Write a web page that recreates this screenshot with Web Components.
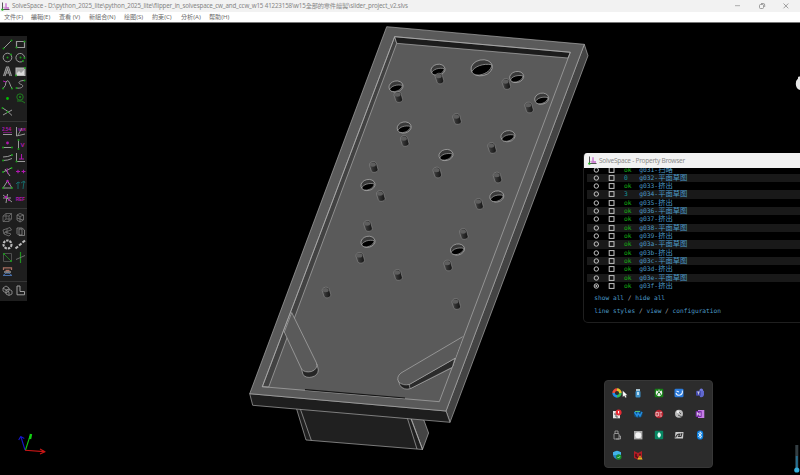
<!DOCTYPE html>
<html lang="zh-Hant">
<head>
<meta charset="utf-8">
<title>SolveSpace</title>
<style>
html,body{margin:0;background:#000;overflow:hidden}
body{width:800px;height:475px}
</style>
</head>
<body>
<solve-app></solve-app>
<script>
const FONT = '"Noto Sans","Noto Sans CJK TC",sans-serif';
function define(name, build){
  customElements.define(name, class extends HTMLElement{
    connectedCallback(){
      if(this.shadowRoot) return;
      this.attachShadow({mode:'open'}).innerHTML = build(this);
    }
  });
}

const LOGO = `<svg viewBox="0 0 9 9" width="9" height="9" fill="none"><path d="M1.5 .5V7.5H8.5" stroke="#555"/><path d="M5 1.2V6M3.3 6H8" stroke="#c86ad0" stroke-width="1.3"/><path d="M2 5.5L4.5 5V7" stroke="#c99acb" stroke-width=".7"/><circle cx="1.4" cy="7.6" r="1.2" fill="#28b428"/></svg>`;

define('app-titlebar', el => `<style>
:host{display:flex;align-items:center;height:12px;background:#f2f2f2;color:#858585;font:6.2px/12px ${FONT};white-space:pre}
svg{display:block;flex:none}.logo{margin-left:1px;width:11px}.t{letter-spacing:-.137px}
.c{margin-left:auto;display:flex;justify-content:space-between;padding-right:10px;width:56px}
</style><span class="logo">${LOGO}</span><span class="t"><slot></slot></span>
<span class="c"><svg width="8" height="8"><path d="M1 3.7H6" stroke="#999" stroke-width=".8"/></svg>
<svg width="8" height="8" fill="none" stroke="#888" stroke-width=".8"><rect x="1.5" y="2.5" width="4" height="4" rx="1"/><path d="M3 1.5H5.5Q6.7 1.5 6.7 3V5"/></svg>
<svg width="8" height="8"><path d="M1.5 1.5L6.3 6.3M6.3 1.5L1.5 6.3" stroke="#888" stroke-width=".8"/></svg></span>`);

define('app-menubar', () => {
  const items=[['文件(F)',27],['編輯(E)',28],['查看 (V)',30],['新組合(N)',35],['绘图(S)',28],['約束(C)',29],['分析(A)',28],['帮助(H)',30]];
  return `<style>:host{display:flex;height:10px;padding-left:4px;background:#fff;border-bottom:1px solid #777;color:#6c6c6c;font:6.1px/10px ${FONT};white-space:pre}</style>`+
   items.map(([t,w])=>`<span style="width:${w}px">${t}</span>`).join('');
});

/* tool glyphs, drawn in a 13 x 13 box */
const g='#35b335', w='#a8a8a8', m='#c018c0';
const L=(d,c=w,s=1)=>`<path d="${d}" stroke="${c}" stroke-width="${s}"/>`;
const D=(x,y,c='#18a818',r=1)=>`<circle cx="${x}" cy="${y}" r="${r}" fill="${c}"/>`;
const T=(t,x,y,c=m,s=4.6)=>`<text x="${x}" y="${y}" fill="${c}" font-size="${s}" font-weight="bold">${t}</text>`;
const groups=[[
 L('M2.5 10.5L10.5 2.5')+D(2.5,10.5)+D(10.5,2.5),
 L('M2.5 3.5H10.5V9.5H2.5Z',w,1.2)+D(2.5,9.5)+D(10.5,3.5),
 `<circle cx="6.5" cy="6.5" r="4.3" stroke="${w}"/>`+D(6.5,6.5)+D(10,3.5),
 L('M9 10A4.3 4.3 0 1 1 10.5 7')+D(6.5,6.5)+D(10.5,7)+D(9,10),
 L('M2.5 11L5.5 2H7.5L10.5 11M4 11L6.5 4L9 11M4.5 8H8.5',w,1.1),
 `<rect x="2" y="3" width="9" height="7.5" fill="#aaa" stroke="#ccc"/><path d="M3 8L5 6L7 8L10 5V10H3Z" fill="#eee"/>`+D(2,10.5)+D(11,3),
 L('M2 10.5Q5 8 5 4Q7 1 8.5 5T11 10.5')+L('M2 3L5 4',m)+D(2,10.5)+D(11,10.5),
 L('M10.5 2.5C4 2.5 4 5.5 6.5 6.2C10.5 7 9 11 2.5 10')+D(10.5,2.5)+D(2.5,10),
 D(6.5,6.5,'#00d000',1.4),
 `<circle cx="6" cy="5" r="3.2" stroke="#208a20"/>`+D(6,5)+L('M3 9Q9 8 11 11','#208a20'),
 L('M1.5 3Q6 5 11 10.5M2 10L11 5')+D(6.5,7)+D(1.5,3)
],[
 T('2.54',1,6)+L('M2 9.5H11')+L('M2 7.5H11',m,.6),
 L('M2.5 2V11L11 9')+T('VAR',4,6,m,3.8)+L('M4 10L8 3',w,.8),
 D(6.5,5,m,1.4)+L('M2 9.5H11')+D(2,9.5)+D(11,9.5),
 L('M4.5 2V11')+T('V',6.5,8.5,m,6)+D(4.5,2)+D(4.5,11),
 L('M2 6Q7 6 11 4M2 9.5Q7 9.5 11 7.5')+D(2,9.5)+D(11,4),
 L('M2.5 2V10.5H11')+L('M7.5 3V8M5 8H10',m)+D(2.5,10.5),
 L('M2 7L10.5 3M4 4L9 11')+D(2,7)+D(10.5,3)+L('M6 3L7 9',m,.8),
 L('M2 6.5H6M4 4.8V8.2M7.5 6.5H11.5M9.5 4.8V8.2',m,1.1),
 L('M2 10L6.5 3L11 10Z')+D(2,10)+D(11,10)+D(6.5,3,m,1.2)+D(8.5,6,m),
 L('M4 11V4L2 6M4 4L6 5M9 11L10 3L7 5M10 3L11 5','#157878',.9),
 L('M2 3L11 10M6.5 2L5 11M2 6L10 6')+D(5,5,m,1.2)+D(8,8,m),
 T('REF',1.7,8.5)
],[
 L('M2 5L5 2.5H10.5V8L8 10.5H2ZM2 5H8V10.5M8 5L10.5 2.5M5 2.5V8H10.5M5 8L2 10.5','#777',.8),
 L('M3 4L6 2.5L9.5 4V9L6 11L3 9ZM3 4L6 5.5L9.5 4M6 5.5V11M3 7L9 9','#888',.8),
 L('M2 5L9 2.5L10.5 5L4 7L10 9L8 11L3 9ZM4 7L3 9M6 4V9','#777',.9),
 L('M3 3H8L10.5 5V10.5H5L3 8.5ZM5 4H8V10H5Z','#999',.8),
 `<circle cx="6.5" cy="6.5" r="4" stroke="#ccc" stroke-width="2.1" stroke-dasharray="2.4 1"/>`,
 L('M1.5 10.5L4 8.5M5 7.5L7.5 5.5M8.5 4.5L11 2.5','#ccc',2.2),
 L('M2.5 2.5H10.5V10.5H2.5Z','#555')+L('M3 3L10 10','#208a20')+D(3,3)+D(10,10),
 L('M6.5 1V12','#20a020',1.2)+L('M2 8.5L11 4.5','#888',.8),
 L('M2.5 5V2.8H10.5V5M4.5 5.5H8.5','#b9786a',1.3)+L('M2 10.5L5 8.2H8L11 10.5Z','#4b75b5')+L('M3 7H10','#ddd')
],[
 L('M2 4L5 2L8 4V7L5 9L2 7ZM5 6L8 5L11 7V10L8 11.5L5 10ZM2 4L8 8V11','#aaa',.8),
 L('M3 2H6V7.5H10.5V10.8H3Z','#aaa',1)
]];
define('tool-palette', () => `<style>
:host{display:block;box-sizing:border-box;width:27px;height:265px;background:#1e1e1e;padding:2px 0 0 0;font-family:"Liberation Sans",sans-serif}
.g{display:grid;grid-template-columns:13px 13px;grid-auto-rows:13.42px;padding:0 .5px}
.g+.g{margin-top:2.8px;border-top:1px solid #363636;padding-top:2.4px}svg{display:block;fill:none;opacity:.9}text{stroke:none}
</style>`+groups.map(a=>`<div class="g">${a.map(i=>`<svg width="13" height="13">${i}</svg>`).join('')}</div>`).join(''));

define('model-view', () => {
  const holes=[[396,86.5],[438,69.8],[516.7,77],[541.7,98.7],[404.2,127.5],[508,136.2],[446,155],[368,185],[496.8,196.5],[368,241.8],[457.5,249.5]];
  const pins=[[398.3,97],[439.5,78.5],[506.3,84],[529,107.5],[457,119],[404.7,141],[492,148],[373.7,167],[437.3,172.5],[497.5,177.5],[380.8,196],[479,204],[368,226],[463.8,234],[360.2,257.8],[448,265.5],[398,275],[326.5,292.5],[456.2,304]];
  return `<style>:host{display:block}svg{display:block}</style>
<svg width="800" height="452" viewBox="0 23 800 452" fill="none" stroke="#b4b4b4" stroke-width=".65" stroke-linejoin="round">
<defs><linearGradient id="p"><stop offset="0" stop-color="#505050"/><stop offset=".4" stop-color="#303030"/><stop offset="1" stop-color="#141414"/></linearGradient>
<g id="h"><ellipse rx="7.1" ry="5.5" fill="#3a3a3a" transform="rotate(-12)"/><path d="M-6.2 3C-5 -.5 1 -2.4 6.3 -1.1C6 2.2 2.2 4.7-1.6 5.1C-4 5.2-5.7 4.4-6.2 3Z" fill="#000"/></g>
<g id="i"><path d="M-4.3 -1.8C-4.5 -6 2.4 -6.6 2.9 -2.8L4.3 2.4C4.4 5.6 -1.9 6.6 -2.6 3.4Z" fill="url(#p)" stroke="#8c8c8c" stroke-width=".6"/><ellipse cx="-.8" cy="-2.4" rx="3" ry="2.2" fill="#5e5e5e" stroke="none"/></g></defs>
<path d="M422 415L428.6 433L422.5 449.5L411 419Z" fill="#444"/>
<path d="M296 407L306 440L422.5 449.5L411 418Z" fill="#202020"/><path d="M300 408L311.3 440.3M407 417L417 449M411 419L422.5 449.5"/>
<path d="M584.3 44.3L588 55.7L450 422.3L446 411Z" fill="#444"/>
<path d="M249.7 393.7L446 411L450 422.3L252.7 405.3Z" fill="#1e1e1e"/>
<path d="M386.7 26.7L584.3 44.3L446 411L249.7 393.7Z" fill="#5a5a5a"/>
<path d="M394.7 36.7L396.7 43.3L268.7 387L262.3 386.7Z" fill="#424242"/>
<path d="M394.7 36.7L570.3 52.3L568 58L396.7 43.3Z" fill="#1c1c1c"/>
<path d="M394.7 36.7L570.3 52.3L439.3 401.7L262.3 386.7Z"/>
<path d="M305 389.6L405 398" stroke="#161616" stroke-width="1.1"/>
${holes.map(([x,y])=>`<use href="#h" x="${x}" y="${y}"/>`).join('')}
<g transform="translate(481.7 67.8) scale(1.52)" stroke-width=".45"><ellipse rx="7.1" ry="5.2" fill="#3a3a3a" transform="rotate(-12)"/><path d="M-6.4 2.4C-5 -.7 1 -3.2 6.6 -2C6.5 1.3 3 4-1.2 4.7C-4 5-6.2 4-6.4 2.4Z" fill="#000"/></g>
${pins.map(([x,y])=>`<use href="#i" x="${x}" y="${y}"/>`).join('')}
<path d="M301.5 369L303 374.5Q306 378.5 312 377Q318 375.5 318.3 370L317 364Z" fill="#252525"/>
<path d="M291.7 312.5L316.5 363Q318.2 369 311.5 371.5Q304.5 373 301.5 369L284.3 332Z" fill="#5a5a5a"/>
<path d="M398 379L400 385.5Q404 390.5 410 388.7L452.3 367.3L455 358.3Z" fill="#202020"/><path d="M409 384.4L455 358.3L452.3 367.3L410.2 388.7Z" fill="#2b2b2b"/>
<path d="M462.7 336.7L401 373Q396 377 398.7 382Q403 386 409.5 384.4L455 358.3" fill="#5a5a5a"/>
<g stroke-width="1.1"><path d="M25 450L21 437M18.7 440L20.7 436.5L24.3 438.5" stroke="#1515c8"/><path d="M25.5 450L30 436M30 439L31 434" stroke="#12c412"/><path d="M30 439L31 434" stroke="#12d012" stroke-width="2.4"/><path d="M25 450.3L44 451.6M40 449L45 451.7L40 454" stroke="#c81616"/></g>
<path d="M800 76.5H799Q797.6 76.6 798 78.5Q795.6 80.5 795.8 84Q796 89 800 90Z" fill="#e8e8e8" stroke="none"/>
<path d="M796.8 445V468" stroke="#333e43" stroke-width="3"/><path d="M796.8 456V470" stroke="#276f91" stroke-width="2"/><circle cx="796.8" cy="470" r="2.6" fill="#35aedb" stroke="none"/>
</svg>`;
});

define('group-row', el => {
  const on=el.hasAttribute('active'), ok=el.getAttribute('state');
  return `<style>:host{display:flex;align-items:center;flex:none;height:8.32px;font:6.3px/8.32px "DejaVu Sans Mono","Noto Sans CJK SC",monospace;color:#4c9ac6;white-space:pre}
svg{flex:none;display:block;width:37px;height:8.32px}.s{width:15.2px;color:${ok==='ok'?'#14b414':'#129a9e'}}.n{display:flex}.k{font-size:7.3px}</style>
<svg fill="none" stroke="#c4c4c4"><circle cx="9.3" cy="4" r="2.2"/>${on?'<circle cx="9.3" cy="4" r="1" fill="#bbb" stroke="none"/>':''}<rect x="22.2" y="1.6" width="4.8" height="4.8"/></svg>
<span class="s">${ok==='ok'?'ok':ok}</span><span class="n">${el.getAttribute('code')}-<span class="k">${el.textContent}</span></span>`;
});

define('property-browser', () => {
  const A='平面草图',B='挤出';
  const rows=[['g031','扫略','ok'],['g032',A,'0'],['g033',B,'ok'],['g034',A,'3'],['g035',B,'ok'],['g036',A,'ok'],['g037',B,'ok'],['g038',A,'ok'],['g039',B,'ok'],['g03a',A,'ok'],['g03b',B,'ok'],['g03c',A,'ok'],['g03d',B,'ok'],['g03e',A,'ok'],['g03f',B,'ok']];
  return `<style>:host{display:flex;flex-direction:column;box-sizing:border-box;width:222px;height:170px;background:#000;border:1px solid #1f1f1f;border-top:0;border-radius:4px 0 0 5px;overflow:hidden}
header{display:flex;flex:none;height:15px;align-items:center;background:#f2f2f2;color:#8c8c8c;font:6.5px/15px ${FONT};letter-spacing:-.24px;padding-left:4px;gap:2px;white-space:pre}
header svg{display:block}
main{flex:none;height:122.2px;overflow:hidden;display:flex;flex-direction:column;justify-content:flex-end;margin-left:3px}
group-row:nth-child(even){background:#191919}
p{margin:0;padding-left:10.3px;font:6.2px/12.4px "DejaVu Sans Mono",monospace;color:#4c9ac6;white-space:pre}i{font-style:normal;color:#aaa}.f{padding-top:2.3px}</style>
<header>${LOGO}<span>SolveSpace - Property Browser</span></header>
<main>${rows.map(([c,t,s],i)=>`<group-row code="${c}" state="${s}" ${i===14?'active':''}>${t}</group-row>`).join('')}</main>
<div class="f"><p>show all <i>/</i> hide all</p><p>line styles <i>/</i> view <i>/</i> configuration</p></div>`;
});

const tray=[
 `<path d="M6 2.6A3.4 3.4 0 0 1 9.4 6" stroke="#e6c52e" stroke-width="2.6"/><path d="M9.4 6A3.4 3.4 0 0 1 6 9.4" stroke="#35bc55" stroke-width="2.6"/><path d="M6 9.4A3.4 3.4 0 0 1 2.6 6" stroke="#218eea" stroke-width="2.6"/><path d="M2.6 6A3.4 3.4 0 0 1 6 2.6" stroke="#ed4b39" stroke-width="2.6"/>`,
 `<path d="M4 2H8V4H4Z" fill="#a8c3d1"/><rect x="3.5" y="4" width="5" height="6.5" rx="1" fill="#3f91c9"/><path d="M5 5H7V8H5Z" fill="#b9ddf3"/>`,
 `<rect x="1.7" y="1.7" width="8.6" height="8.6" rx="1" fill="#168016"/><circle cx="6" cy="6" r="3.2" fill="#eee"/><path d="M3.5 9Q4.5 6 6 5Q7.5 6 8.5 9M4 3.5Q5 3.5 6 4.3Q7 3.5 8 3.5" stroke="#168016"/>`,
 `<rect x="1.5" y="1.7" width="9" height="8.6" rx="1.3" fill="#2b7bdc"/><path d="M3 6Q4 9 7 8T9.3 3.5M3.5 4L6 5" stroke="#e6f1ff" stroke-width="1.1"/>`,
 `<circle cx="7.3" cy="3.3" r="1.8" fill="#7078df"/><path d="M5 4H10V8Q9 11 6 10Z" fill="#6068cd"/><rect x="2" y="3.7" width="5" height="5" rx=".8" fill="#454bb0"/><path d="M3.2 5H5.8M4.5 5V7.5" stroke="#ddd" stroke-width=".8"/>`,
 `<path d="M2 3H9V10.3H2Z" fill="#e6e6e6"/><path d="M3 6H5V9H7" stroke="#555"/><circle cx="7.6" cy="4.6" r="3" fill="#e52b34"/><path d="M7.6 3V5.4" stroke="#fff"/>`,
 `<rect x="1.8" y="2.5" width="8.6" height="7" rx="3" fill="#124a70"/><path d="M2.5 4L5 8L6 5L8 8L10 4" stroke="#238be0" stroke-width="1.5"/><path d="M3 3.5H8" stroke="#54bd75"/>`,
 `<circle cx="6" cy="6" r="4.3" fill="#b61f2c"/><path d="M3 4.3H5.3V8H3ZM6.5 4.3H9M6.5 6H8.5M6.5 8H9" stroke="#f3d5d5" stroke-width=".9"/>`,
 `<circle cx="6" cy="5.7" r="4" fill="#bbb"/><path d="M4 5L6 4L8 6M5 7L9 9" stroke="#555"/><circle cx="5" cy="4" r="1.4" fill="#eee"/>`,
 `<path d="M4 2H10.3V10H4Z" fill="#c57be5"/><rect x="1.7" y="3" width="6" height="6" rx=".7" fill="#7a2ba9"/><path d="M3.3 7.6V4.5L6 7.6V4.5" stroke="#fff" stroke-width=".8"/>`,
 `<path d="M4 4.5V2H7V4.5M3 10V5Q3 4.5 4 4.5H7Q8 4.5 8 5V10ZM8 7H9.5V10H5" stroke="#aaa" stroke-width=".8"/>`,
 `<rect x="2" y="2" width="8.4" height="8.4" fill="#aaa"/><circle cx="6.2" cy="6.2" r="3" fill="#f4f4f4"/><path d="M4 4L8.5 8.5M8.5 4L4 8.5" stroke="#f4f4f4"/>`,
 `<rect x="1.8" y="1.8" width="8.4" height="8.4" rx="1" fill="#078763"/><path d="M6 3L7.8 5V7L6 9L4.5 7V5Z" fill="#e7fff8"/>`,
 `<path d="M2.5 3H10.5L10 9.5H1.7Z" fill="#ccc"/><path d="M2.5 8.5Q4 4.5 7 5L5.5 7.5H8L9 4" stroke="#333" stroke-width="1.1"/>`,
 `<rect x="3" y="1.5" width="6.2" height="9" rx="3.1" fill="#0b7fe0"/><path d="M4.2 4.3L7.8 7.5L6 9.2V2.8L7.8 4.5L4.2 7.7" stroke="#fff" stroke-width=".8"/>`,
 `<path d="M2 3.3L6 1.7L10 3.3V6Q9.5 9 6 10.5Q2.2 8.5 2 6Z" fill="#2687c7"/><path d="M6 1.7L10 3.3V6H2V3.3Z" fill="#43b3e8"/><circle cx="7.8" cy="8" r="2.7" fill="#168b2d"/><path d="M6.5 8L7.5 9L9 7.2" stroke="#cfffcf" stroke-width=".7"/>`,
 `<path d="M2 2L6 4L10 2V9L6 10.5L2 9Z" fill="#b51c25"/><path d="M4 4.7V7.5L6 8.5M8 4.7V7" stroke="#3c1115" stroke-width="1.3"/><path d="M8 6.2L10.6 10.6H5.4Z" fill="#f5bc24"/><path d="M8 7.5V9.3" stroke="#333" stroke-width=".8"/>`
];
define('tray-flyout', () => `<style>:host{display:grid;grid-template-columns:repeat(5,20.85px);grid-auto-rows:20.7px;box-sizing:border-box;width:109px;height:88px;padding:2px;background:#2c2c2c;border:1px solid #373737;border-radius:4px}
span{display:grid;place-items:center;border-radius:2px}span:first-child{background:#383838}svg{display:block}.cur{position:absolute;left:17.5px;top:8.5px}</style>`+
tray.map(s=>`<span><svg width="12" height="12" fill="none">${s}</svg></span>`).join('')+
`<svg class="cur" width="7" height="9"><path d="M.7.5L5.5 5.2H3.7L4.6 7.3L3.2 7.8L2.3 5.8L.7 7Z" fill="#fff" stroke="#333" stroke-width=".3"/></svg>`);

define('solve-app', () => `<style>:host{display:flex;flex-direction:column;position:relative;width:800px;height:475px;overflow:hidden;background:#000}
app-titlebar,app-menubar{flex:none}
model-view{flex:none}tool-palette,property-browser,tray-flyout{position:absolute}
tool-palette{left:0;top:36px}property-browser{left:583px;top:153px}tray-flyout{left:603.5px;top:380px}</style>
<app-titlebar>SolveSpace - D:\\python_2025_lite\\python_2025_lite\\flipper_in_solvespace_cw_and_ccw_w15 41223158\\w15全部的零件繪製\\slider_project_v2.slvs</app-titlebar>
<app-menubar></app-menubar><model-view></model-view><tool-palette></tool-palette><property-browser></property-browser><tray-flyout></tray-flyout>`);
</script>
</body>
</html>
